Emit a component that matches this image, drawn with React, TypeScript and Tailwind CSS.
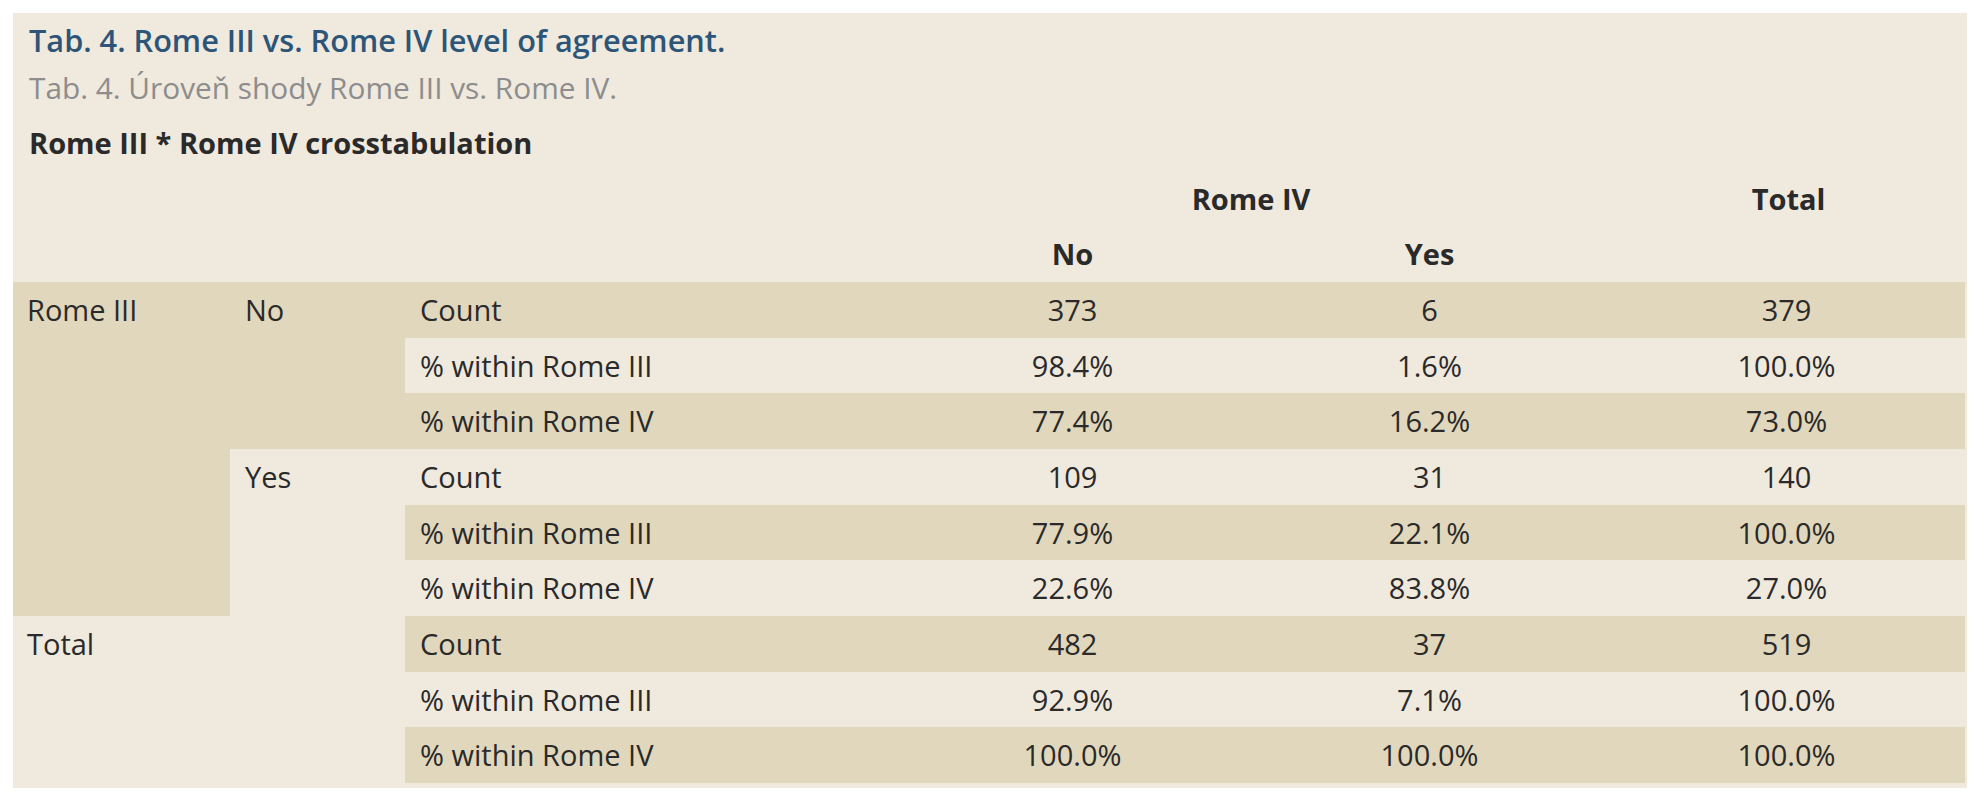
import React from "react";

type Row = { label: string; no: string; yes: string; total: string; pos: string };

export default function App(): JSX.Element {
  const rows: Row[] = [
    { label: "Count", no: "373", yes: "6", total: "379", pos: "row-start-4" },
    { label: "% within Rome III", no: "98.4%", yes: "1.6%", total: "100.0%", pos: "row-start-5" },
    { label: "% within Rome IV", no: "77.4%", yes: "16.2%", total: "73.0%", pos: "row-start-6" },
    { label: "Count", no: "109", yes: "31", total: "140", pos: "row-start-7" },
    { label: "% within Rome III", no: "77.9%", yes: "22.1%", total: "100.0%", pos: "row-start-8" },
    { label: "% within Rome IV", no: "22.6%", yes: "83.8%", total: "27.0%", pos: "row-start-9" },
    { label: "Count", no: "482", yes: "37", total: "519", pos: "row-start-10" },
    { label: "% within Rome III", no: "92.9%", yes: "7.1%", total: "100.0%", pos: "row-start-11" },
    { label: "% within Rome IV", no: "100.0%", yes: "100.0%", total: "100.0%", pos: "row-start-12" },
  ];

  return (
    <div className="min-h-screen bg-white p-[13px] font-['Open_Sans',sans-serif] text-[#2a2a2a]">
      <div className="w-[1954px] bg-[#f0e9de] pt-[3px] pb-[5px]">
        <h1 className="px-4 text-[30.7px] leading-[48px] font-semibold text-[#2c5578]">
          Tab. 4. Rome III vs. Rome IV level of agreement.
        </h1>
        <p className="mb-[3px] px-4 text-[29.8px] leading-[48px] text-[#8d8d8d]">
          Tab. 4. Úroveň shody Rome III vs. Rome IV.
        </p>

        <div className="grid grid-cols-[217px_175px_489px_357px_357px_357px] auto-rows-[55.67px] text-[29px] leading-[55.67px]">
          <div className="col-span-6 px-4 font-bold">Rome III * Rome IV crosstabulation</div>

          <div className="col-span-2 col-start-4 row-start-2 text-center font-bold">Rome IV</div>
          <div className="col-start-6 row-start-2 pl-[4px] text-center font-bold">Total</div>
          <div className="col-start-4 row-start-3 text-center font-bold">No</div>
          <div className="col-start-5 row-start-3 text-center font-bold">Yes</div>

          <div className="col-start-1 row-span-6 row-start-4 bg-[#e1d7bc] pl-[14px]">Rome III</div>
          <div className="col-start-2 row-span-3 row-start-4 bg-[#e1d7bc] pl-[15px]">No</div>
          <div className="col-start-2 row-span-3 row-start-7 pl-[15px]">Yes</div>
          <div className="col-start-1 row-span-3 row-start-10 pl-[14px]">Total</div>

          {rows.map((r, i) => (
            <div
              key={i}
              className={`col-span-4 col-start-3 grid grid-cols-subgrid ${r.pos} ${
                i % 2 === 0 ? "bg-[#e1d7bc]" : "bg-[#f0e9de]"
              }`}
            >
              <div className="pl-[15px]">{r.label}</div>
              <div className="text-center">{r.no}</div>
              <div className="text-center">{r.yes}</div>
              <div className="text-center">{r.total}</div>
            </div>
          ))}
        </div>
      </div>
    </div>
  );
}
